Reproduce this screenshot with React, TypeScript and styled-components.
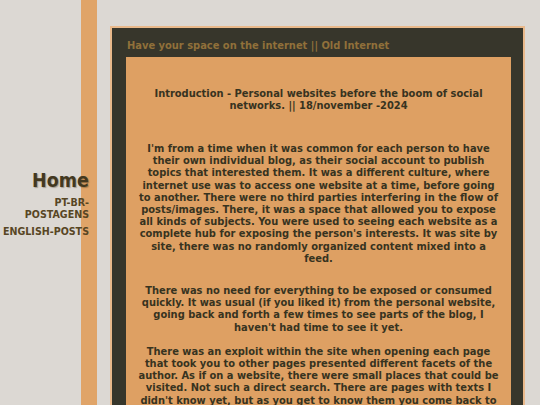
import React from "react";
import styled, { createGlobalStyle } from "styled-components";

const Global = createGlobalStyle`
  html, body { margin: 0; padding: 0; background: #dcd8d3; }
  body { font-family: "DejaVu Sans Condensed", "DejaVu Sans", Verdana, sans-serif; }
`;

const Page = styled.div`
  display: flex;
  align-items: flex-start;
  min-height: 100vh;
`;

const Sidebar = styled.nav`
  flex: 0 0 97px;
  height: 100vh;
  position: sticky;
  top: 0;
  display: flex;
  flex-direction: column;
  justify-content: center;
  align-items: flex-end;
  padding-right: 8px;
  box-sizing: border-box;
  background: linear-gradient(to right, transparent 81px, #e0a468 81px, #e0a468 97px);
`;

const NavLink = styled.a<{ $big?: boolean }>`
  display: block;
  text-align: right;
  font-weight: bold;
  text-decoration: none;
  color: ${(p) => (p.$big ? "#43381f" : "#584624")};
  font-size: ${(p) => (p.$big ? "19.5px" : "10.6px")};
  line-height: ${(p) => (p.$big ? "24px" : "12px")};
  margin-bottom: ${(p) => (p.$big ? "3px" : "5px")};
  text-shadow: ${(p) => (p.$big ? "1px 1px 1px rgba(60,45,20,0.35)" : "none")};
  max-width: 88px;
  &:last-child { margin-bottom: 0; }
`;

const Main = styled.main`
  flex: 1;
  padding: 26px 15px 0 13px;
`;

const Frame = styled.section`
  border: 2px solid #e9b98b;
  background: #37362b;
  padding: 11px 12px 0 14px;
`;

const FrameTitle = styled.h1`
  margin: 0 0 4px 1px;
  font-size: 11px;
  line-height: 14px;
  font-weight: bold;
  color: #90703a;
`;

const Content = styled.article`
  background: #dea063;
  padding: 31px 10px 20px;
  color: #37331f;
  text-align: center;
  font-weight: bold;
  font-size: 11px;
  line-height: 12.2px;
`;

const Heading = styled.h2`
  margin: 0 0 31px;
  font-size: 11px;
  line-height: 12px;
  font-weight: bold;
`;

const Para = styled.p<{ $gap?: number }>`
  margin: 0 0 ${(p) => p.$gap ?? 12}px;
`;

export default function App() {
  return (
    <>
      <Global />
      <Page>
        <Sidebar>
          <NavLink $big href="#">Home</NavLink>
          <NavLink href="#">PT-BR-POSTAGENS</NavLink>
          <NavLink href="#">ENGLISH-POSTS</NavLink>
        </Sidebar>
        <Main>
          <Frame>
            <FrameTitle>Have your space on the internet || Old Internet</FrameTitle>
            <Content>
              <Heading>
                Introduction - Personal websites before the boom of social networks. || 18/november -2024
              </Heading>
              <Para $gap={20}>
                I'm from a time when it was common for each person to have their own individual blog, as their social account to publish topics that interested them. It was a different culture, where internet use was to access one website at a time, before going to another. There were no third parties interfering in the flow of posts/images. There, it was a space that allowed you to expose all kinds of subjects. You were used to seeing each website as a complete hub for exposing the person's interests. It was site by site, there was no randomly organized content mixed into a feed.
              </Para>
              <Para $gap={12}>
                There was no need for everything to be exposed or consumed quickly. It was usual (if you liked it) from the personal website, going back and forth a few times to see parts of the blog, I haven't had time to see it yet.
              </Para>
              <Para>
                There was an exploit within the site when opening each page that took you to other pages presented different facets of the author. As if on a website, there were small places that could be visited. Not such a direct search. There are pages with texts I didn't know yet, but as you get to know them you come back to explore the site more, finding new corners and pages that you hadn't seen before.
              </Para>
            </Content>
          </Frame>
        </Main>
      </Page>
    </>
  );
}
